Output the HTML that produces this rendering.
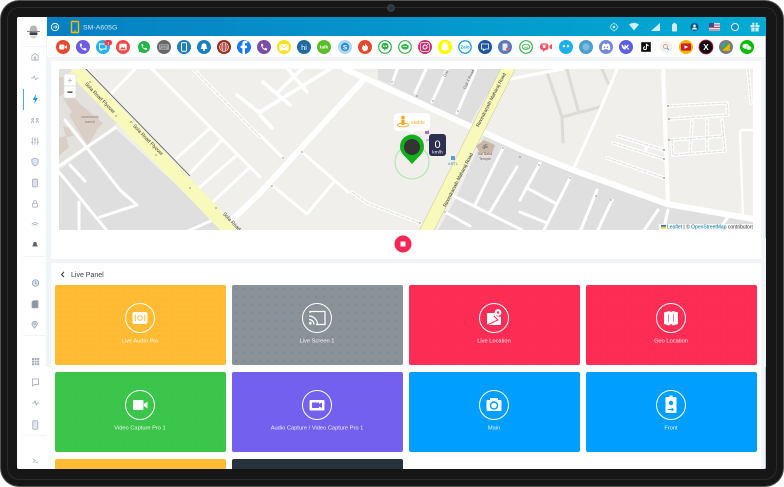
<!DOCTYPE html>
<html><head><meta charset="utf-8"><style>
html,body{margin:0;padding:0;background:#fff;width:784px;height:487px;overflow:hidden;font-family:"Liberation Sans",sans-serif}
.abs{position:absolute}
#frame{left:1px;top:1px;width:782px;height:485px;background:#161616;border-radius:18px;box-shadow:0 0 0 1px #555;box-sizing:border-box}
#ring{left:7px;top:7px;width:770px;height:473px;border:1px solid #2b2b2b;border-radius:12px;box-sizing:border-box}
#screen{left:17px;top:17px;width:749px;height:452px;background:#f1f5f7;overflow:hidden;border-radius:2px}
.t{position:absolute;width:171px;height:80px;border-radius:2px}
.dots{background-image:radial-gradient(circle,rgba(0,0,0,.22) .5px,transparent .7px);background-size:8px 8px}
.dl{background-image:radial-gradient(circle,rgba(0,0,0,.06) .5px,transparent .8px);background-size:6px 6px}
svg{position:absolute;left:0;top:0;filter:blur(.3px)}
svg text{font-family:"Liberation Sans",sans-serif}
</style></head><body>
<div class="abs" id="frame"></div>
<div class="abs" id="ring"></div>
<div class="abs" id="screen">
 <div class="abs" style="left:0;top:0;width:29px;height:452px;background:#fff"></div>
 <div class="abs" style="left:29px;top:350px;width:5px;height:102px;background:#fff"></div>
 <div class="abs" style="left:30px;top:0;width:719px;height:19px;background:linear-gradient(90deg,#0880c2,#00abd3)"></div>
 <div class="abs" style="left:30px;top:19px;width:719px;height:21px;background:#fff"></div>
 <div class="abs" style="left:34px;top:44px;width:710px;height:198px;background:#fff;border-radius:2px"></div>
 <div class="abs" style="left:34px;top:246px;width:710px;height:206px;background:#fff;border-radius:2px"></div>
 <div class="abs" style="left:748px;top:19px;width:1px;height:202px;background:#b8c4e4"></div>
 <div class="abs" style="left:748px;top:350px;width:1px;height:102px;background:#b8c4e4"></div>
 <div class="t dl" style="left:38px;top:268px;background-color:#ffbb33"></div>
 <div class="t dots" style="left:215px;top:268px;background-color:#8a9299"></div>
 <div class="t dl" style="left:392px;top:268px;background-color:#fe2d55"></div>
 <div class="t dl" style="left:569px;top:268px;background-color:#fe2d55"></div>
 <div class="t dl" style="left:38px;top:355px;background-color:#3cc54b"></div>
 <div class="t" style="left:215px;top:355px;background-color:#7460ee"></div>
 <div class="t" style="left:392px;top:355px;background-color:#009fff"></div>
 <div class="t" style="left:569px;top:355px;background-color:#009fff"></div>
 <div class="t" style="left:38px;top:442px;height:10px;border-radius:2px 2px 0 0;background-color:#ffbb33"></div>
 <div class="t" style="left:215px;top:442px;height:10px;border-radius:2px 2px 0 0;background-color:#27333a"></div>
</div>
<svg width="784" height="487" viewBox="0 0 784 487">
<defs><clipPath id="mc"><rect x="59" y="69" width="694" height="161"/></clipPath></defs>
<circle cx="391" cy="8" r="4" fill="#353c44"/><circle cx="391" cy="8" r="1.600" fill="#2c323a"/>
<g clip-path="url(#mc)">
<rect x="59" y="69" width="694" height="161" fill="#f0efeb"/>
<polygon points="59,69 70,69 118,122 87,148 59,166" fill="#e3e1de"/>
<polygon points="59,170 115,128 225,230 59,230" fill="#e0dfdf"/>
<g fill="#d9cfc6">
<polygon points="69,115 80,104 103,123 97,130 88,146 78,130"/>
<polygon points="59,77 65,77 66,92 59,97"/><polygon points="63,98 70,92 80,104 72,112"/>
<polygon points="59,138 66,136 69,147 59,156"/>
<polygon points="63,126 69,128 74,136 66,137"/>
</g>
<text x="90" y="118" font-size="3.600" fill="#8b7a6c" text-anchor="middle">community</text>
<text x="90" y="123" font-size="3.600" fill="#8b7a6c" text-anchor="middle">transit</text>
<g fill="#e0dfdf">
<polygon points="484,135 520,152 667,205 753,220 753,230 438,230 456,198"/>
<polygon points="378,69 505,69 485,98 470,124 378,79"/>
</g>
<g fill="none" stroke="#dcdcd7" stroke-width="3" stroke-linecap="round" stroke-linejoin="round">
<polyline points="547,72 562,117 563,142"/><polyline points="567,69 578,110"/><polyline points="562,117 600,107"/><polyline points="602,69 608,83"/>
</g>
<g fill="none" stroke="#fff" stroke-linecap="round" stroke-linejoin="round">
<g stroke-width="3">
<polyline points="59,166 115,128"/><polyline points="65,120 87,148 120,190 137,205 100,217"/><polyline points="70,165 85,181"/><polyline points="59,172 108,232"/><polyline points="79,202 79,232"/><polyline points="186,232 217,218"/>
<polyline points="110,95 137,67"/><polyline points="150,67 260,177"/><polyline points="177,158 210,128"/><polyline points="190,173 222,140"/><polyline points="200,187 237,155"/><polyline points="213,202 250,167"/>
<polyline points="303,153 348,192"/><polyline points="273,186 307,214 333,183"/><polyline points="260,135 283,158"/>
<polyline points="398,67 392,83"/><polyline points="427,67 415,93"/><polyline points="448,67 432,102"/><polyline points="477,67 457,113"/>
<polyline points="503,148 475,205"/><polyline points="517,167 490,212"/><polyline points="452,195 522,230"/><polyline points="445,212 470,226"/>
<polyline points="540,163 520,200"/><polyline points="527,188 555,203"/><polyline points="520,212 547,223"/><polyline points="570,178 543,232"/><polyline points="597,190 580,232"/><polyline points="612,200 597,232"/><polyline points="658,210 643,232"/><polyline points="668,210 663,232"/><polyline points="728,217 723,224"/>
<polyline points="563,69 520,77 495,83"/>
<polyline points="618,67 600,110 573,170"/>
<polyline points="753,130 741,130 740,134 743,214" stroke-width="2.400"/>
</g>
<polyline points="663,67 668,205" stroke-width="4"/>
<polyline points="345,69 520,149 573,170 667,204 753,219" stroke-width="6"/>
<polyline points="365,78 260,193 230,222" stroke-width="6"/>
</g>
<g fill="none" stroke-linecap="round" stroke-linejoin="round">
<g stroke="#fff" stroke-width="3.600">
<polyline points="193,69 260,137"/><polyline points="237,95 260,113"/>
<polyline points="330,69 260,112"/><polyline points="302,69 277,93"/><polyline points="288,69 307,92"/><polyline points="263,82 290,105"/><polyline points="260,115 272,128"/>
<polyline points="352,192 367,203 420,223"/>
<polyline points="668,106 727,103 728,115 670,119"/><polyline points="670,140 723,136"/><polyline points="672,140 673,155 725,151 722,120"/><polyline points="692,122 690,153"/><polyline points="707,120 707,152"/>
<polyline points="618,136 664,150"/><polyline points="613,143 664,159"/><polyline points="607,158 664,178"/><polyline points="647,145 645,153"/>
<polyline points="748,69 751,103"/>
</g>
<g stroke="#e2e2de" stroke-width="1.300" stroke-dasharray="3.500 2">
<polyline points="193,69 260,137"/>
<polyline points="352,192 367,203 420,223"/>
<polyline points="668,106 727,103 728,115 670,119"/><polyline points="670,140 723,136"/><polyline points="672,140 673,155 725,151 722,120"/><polyline points="692,122 690,153"/><polyline points="707,120 707,152"/>
<polyline points="618,136 664,150"/><polyline points="613,143 664,159"/><polyline points="607,158 664,178"/>
<polyline points="748,69 751,103"/>
</g></g>
<polyline points="74,69 232,232" fill="none" stroke="#f7fabb" stroke-width="14"/>
<line x1="84" y1="67" x2="190" y2="176" stroke="#55574a" stroke-width=".8"/>
<polyline points="511,63 424,236" fill="none" stroke="#c9ca8f" stroke-width="13.500"/>
<polyline points="511,63 424,236" fill="none" stroke="#f7fabb" stroke-width="12.500"/>
<g font-size="5" fill="#333">
<text transform="translate(100,98) rotate(46)" text-anchor="middle" dy="1.500">Sola Road Flyover</text>
<text transform="translate(148,140) rotate(46)" text-anchor="middle" dy="1.500">Sola Road Flyover</text>
<text transform="translate(238,228) rotate(46)" text-anchor="middle" dy="1.500">Sola Road Flyover</text>
<text transform="translate(458,180) rotate(-63)" text-anchor="middle" dy="1.500" font-size="4.800">Ravindranath Maharaj Road</text>
<text transform="translate(491,100) rotate(-63)" text-anchor="middle" dy="1.500" font-size="4.800">Ravindranath Maharaj Road</text>
<text transform="translate(470,80) rotate(-65)" text-anchor="middle" font-size="4" fill="#666">Gali 4 Road</text>
<text transform="translate(447,74) rotate(-65)" text-anchor="middle" font-size="4" fill="#666">Gali</text>
</g>
<g fill="#555"><circle cx="90" cy="82" r=".6"/><circle cx="116" cy="116" r=".6"/><circle cx="131" cy="122" r=".6"/><circle cx="156" cy="155" r=".6"/><circle cx="190" cy="188" r=".6"/><circle cx="216" cy="208" r=".6"/><circle cx="302" cy="152" r=".6"/><circle cx="283" cy="158" r=".6"/><circle cx="272" cy="186" r=".6"/><circle cx="392" cy="82" r=".6"/><circle cx="417" cy="96" r=".6"/><circle cx="433" cy="101" r=".6"/><circle cx="458" cy="111" r=".6"/><circle cx="420" cy="223" r=".6"/><circle cx="445" cy="212" r=".6"/><circle cx="503" cy="148" r=".6"/><circle cx="539" cy="165" r=".6"/><circle cx="570" cy="178" r=".6"/><circle cx="596" cy="196" r=".6"/><circle cx="611" cy="200" r=".6"/><circle cx="668" cy="106" r=".7"/><circle cx="669" cy="119" r=".7"/><circle cx="669" cy="140" r=".7"/><circle cx="664" cy="150" r=".7"/><circle cx="664" cy="159" r=".7"/><circle cx="664" cy="178" r=".7"/><circle cx="520" cy="157" r=".6"/></g>
<polygon points="476,146 484,140 495,145 492,153 480,153" fill="#c9b8a8"/>
<text x="485" y="149" font-size="6" fill="#555" text-anchor="middle">ॐ</text>
<text x="485" y="155" font-size="3.600" fill="#7a5a46" text-anchor="middle">Sai Baba</text>
<text x="485" y="160" font-size="3.600" fill="#7a5a46" text-anchor="middle">Temple</text>
<rect x="451" y="156" width="4" height="4" fill="#5a9fd8"/><text x="453" y="165" font-size="4" fill="#4a90d0" text-anchor="middle">ARTL</text>
<rect x="425" y="130" width="4" height="4" fill="#a671b8"/>
<text x="426" y="141" font-size="3.600" fill="#a671b8">pet</text>
<circle cx="412" cy="162" r="17" fill="none" stroke="#a8e6aa" stroke-width="1"/>
<path d="M412 164 L403.500 155 A12 12 0 1 1 420.500 155 Z" fill="#13b01c"/>
<circle cx="412" cy="147" r="8" fill="#343434"/>
<rect x="429" y="134" width="17" height="22" rx="3" fill="#2d2f50"/>
<text x="437.500" y="148" font-size="11" fill="#fff" text-anchor="middle">0</text>
<text x="437.500" y="153.500" font-size="4.800" fill="#fff" text-anchor="middle">km/h</text>
<rect x="394" y="113" width="36" height="18" rx="3.500" fill="#fff"/>
<polygon points="408,131 412,134 416,131" fill="#fff"/>
<circle cx="403" cy="117.500" r="1.800" fill="#f5a623"/><rect x="401.300" y="119.500" width="3.400" height="5.500" rx="1" fill="#f5a623"/><ellipse cx="403" cy="125" rx="5.500" ry="1.800" fill="none" stroke="#f5a623" stroke-width=".9"/>
<text x="411" y="124" font-size="5.200" fill="#f9b233">stable</text>
<rect x="659" y="224" width="94" height="6" fill="#fff" fill-opacity=".8"/>
<rect x="661" y="225" width="5" height="1.800" fill="#3b6fc9"/><rect x="661" y="226.800" width="5" height="1.800" fill="#f5d327"/>
<text x="667" y="228.500" font-size="5" fill="#333"><tspan fill="#0078a8">Leaflet</tspan> | © <tspan fill="#0078a8">OpenStreetMap</tspan> contributors</text>
</g>
<rect x="64" y="74" width="12" height="24" rx="1.500" fill="#fff" stroke="#ddd" stroke-width=".6"/><line x1="64" y1="86" x2="76" y2="86" stroke="#ccc" stroke-width=".5"/>
<text x="70" y="83" font-size="8" fill="#bbb" text-anchor="middle" font-weight="bold">+</text>
<rect x="67.500" y="91.500" width="5" height="1.300" fill="#333"/>
<circle cx="403" cy="244" r="8.500" fill="#f5275a"/><rect x="400.500" y="241.500" width="5" height="5" rx=".5" fill="#fff"/>
<circle cx="55" cy="27" r="3.700" fill="none" stroke="#fff" stroke-width=".9"/><path d="M53 27H57M55.500 25.500L57 27 55.500 28.500" stroke="#fff" stroke-width=".7" fill="none"/>
<rect x="71.500" y="21.500" width="7" height="11" rx=".8" fill="none" stroke="#fcb900" stroke-width="1.400"/><rect x="74" y="30.500" width="2" height=".9" fill="#fcb900"/>
<text x="83" y="29.500" font-size="6.800" fill="#cfe9f6" letter-spacing=".1">SM-A605G</text>
<g fill="#d3edf6">
<circle cx="614" cy="27" r="3.300" fill="none" stroke="#d3edf6" stroke-width=".7"/><circle cx="614" cy="27" r="1.300"/><path d="M614 22.500v1.200M614 30.300v1.200M609.500 27h1.200M617.300 27h1.200" stroke="#d3edf6" stroke-width=".6"/>
<path d="M629 24.500 Q634 21 639 24.500 L634 30.500Z"/>
<polygon points="651,31 660,23 660,31"/>
<rect x="672" y="24" width="5" height="7.500" rx=".8"/><rect x="673.300" y="22.800" width="2.400" height="1.400"/>
<circle cx="694.500" cy="27" r="4" fill="#0b4f86"/><circle cx="694.500" cy="25.800" r="1.300" fill="#fff"/><path d="M692 29.500a2.500 2 0 0 1 5 0z" fill="#fff"/>
</g>
<g><rect x="709" y="23" width="11" height="8" fill="#d8dde6"/><rect x="709" y="24.500" width="11" height="1" fill="#b85a6e"/><rect x="709" y="27" width="11" height="1" fill="#b85a6e"/><rect x="709" y="29.500" width="11" height="1" fill="#b85a6e"/><rect x="709" y="23" width="5" height="4" fill="#394f8f"/></g>
<circle cx="735" cy="27" r="3.500" fill="#0a8ed0" stroke="#e8f6fb" stroke-width="1"/>
<g fill="#d3edf6"><rect x="750.500" y="25" width="9" height="2.300"/><rect x="751.300" y="27.800" width="7.400" height="3.700"/><rect x="754.500" y="25" width="1" height="6.500" fill="#33b5d8"/><circle cx="753.300" cy="23.800" r="1.200"/><circle cx="756.700" cy="23.800" r="1.200"/></g>
<g id="apps" font-weight="bold" text-anchor="middle">
<g transform="translate(63,47)"><circle r="7" fill="#e64a2e"/><rect x="-3.700" y="-2.500" width="5" height="5" rx="1" fill="#fff"/><polygon points="1.700,-.5 3.900,-2 3.900,2 1.700,.5" fill="#fff"/></g>
<g transform="translate(83,47)"><circle r="7" fill="#6f5ce6"/><path d="M-3.200-3.200C-3.200 1-.2 3.600 3.200 3.600L3.400 1.500 1.300 .8 .3 1.800C-.8 1.300-1.500.4-1.800-.6L-.9-1.500-1.400-3.500Z" fill="#fff"/></g>
<g transform="translate(103,47)"><circle r="7" fill="#28b0ec"/><path d="M-3.500-3H3V2H0L-2 3.500V2H-3.500Z" fill="none" stroke="#fff" stroke-width=".9"/><rect x="1.500" y="-7" width="7.500" height="5.500" rx="2.500" fill="#f0374e"/><text x="5.200" y="-2.600" font-size="4" fill="#fff">1</text></g>
<g transform="translate(123,47)"><circle r="7" fill="#ef4d4b"/><rect x="-3.700" y="-3.200" width="7.400" height="6.400" rx="1" fill="#fff"/><path d="M-3 2.400L-1 -.2 .5 1.200 1.500 .3 3 2.400Z" fill="#ef4d4b"/></g>
<g transform="translate(144,47)"><circle r="6" fill="#25b34a"/><path d="M-5.500 5.500L-4.600 3 -3 4.700Z" fill="#25b34a"/><path d="M-2.500-2.700C-2.500.8.200 2.900 2.800 2.900L3 1.300 1.200.7.400 1.400C-.5 1-1.100.3-1.300-.5L-.6-1.200-1.100-2.900Z" fill="#fff"/></g>
<g transform="translate(164,47)"><circle r="7" fill="#666"/><rect x="-5" y="-2.800" width="10" height="5.600" rx=".8" fill="#aaa"/><path d="M-4-1.500H4M-4 0H4M-2.500 1.500H2.500" stroke="#555" stroke-width=".7" stroke-dasharray="1 .6"/></g>
<g transform="translate(184,47)"><circle r="7" fill="#1f7fb8"/><rect x="-2.500" y="-4.200" width="5" height="8.400" rx=".9" fill="none" stroke="#fff" stroke-width="1"/></g>
<g transform="translate(204,47)"><circle r="7" fill="#1a7fbf"/><path d="M-3.500 2C-2.700 1-2.500 0-2.500-1A2.500 2.700 0 0 1 2.500-1C2.500 0 2.700 1 3.500 2Z" fill="#fff"/><circle cy="3" r="1" fill="#fff"/></g>
<g transform="translate(224,47)"><circle r="7" fill="#9c2a1e"/><g fill="none" stroke="#fff" stroke-width=".6"><circle r="4.500"/><ellipse rx="2" ry="4.500"/><path d="M-4.500 0H4.500M-4-2H4M-4 2H4"/></g></g>
<g transform="translate(244,47)"><circle r="7" fill="#1877f2"/><path d="M1.200-6.200C-.8-6.400-1.600-5-1.600-3.600V-1.400H-3.400V1.100H-1.600V7H1V1.100H2.900L3.200-1.400H1V-3.100C1-3.700 1.300-3.900 1.800-3.900H3.300V-6.100Z" fill="#fff"/></g>
<g transform="translate(264,47)"><circle r="7" fill="#7d4ca8"/><path d="M-3-3C-3 1-.2 3.400 3 3.400L3.200 1.500 1.200.8.300 1.700C-.7 1.200-1.300.4-1.500-.5L-.7-1.400-1.200-3.300Z" fill="#fff"/></g>
<g transform="translate(284,47)"><circle r="7" fill="#f8e21b"/><rect x="-4.500" y="-3" width="9" height="6.500" rx=".5" fill="#fff"/><path d="M-4.500-3L0 .8 4.500-3" fill="none" stroke="#f8e21b" stroke-width=".7"/></g>
<g transform="translate(304,47)"><circle r="7" fill="#1c6aa0"/><text y="2.800" font-size="7.500" fill="#fff" font-weight="normal">hi</text></g>
<g transform="translate(324,47)"><circle r="7" fill="#5bbd2b"/><text y="1.700" font-size="4.800" fill="#fff">talk</text></g>
<g transform="translate(345,47)"><circle r="7" fill="#a9d8f0"/><circle r="4.200" fill="#2f8fd0"/><text y="2.400" font-size="6.500" fill="#fff">S</text></g>
<g transform="translate(365,47)"><circle r="7" fill="#e64a2a"/><path d="M0-4.500C.5-2 3-1.500 3 1A3 3.200 0 0 1-3 1C-3-.5-2-1-1.500-2-1-1-.5-.8 0-.8.300-2 .3-3 0-4.500Z" fill="#fff"/></g>
<g transform="translate(385,47)"><circle r="6.300" fill="#fff" stroke="#2fb14a" stroke-width="1.200"/><path d="M-3.500-1.200A3.500 3 0 0 1 3.500-1.200V.5A3.500 3 0 0 1 0 2.500L-1 4V2.300A3.500 3 0 0 1-3.500.5Z" fill="#2fb14a"/><rect x="-2" y="-1.500" width="1.400" height="1.500" fill="#fff"/><rect x=".6" y="-1.500" width="1.400" height="1.500" fill="#fff"/></g>
<g transform="translate(405,47)"><circle r="6.300" fill="#fff" stroke="#36b54a" stroke-width="1.200"/><ellipse cy="-.2" rx="3.800" ry="2.800" fill="#36b54a"/><path d="M-2-.5H2" stroke="#fff" stroke-width=".6"/></g>
<g transform="translate(425,47)"><circle r="7" fill="#c13584"/><rect x="-4.500" y="-4.500" width="9" height="9" rx="2.200" fill="none" stroke="#ffcf9e" stroke-width=".9"/><circle r="2" fill="none" stroke="#fff" stroke-width="1"/><circle cx="2.700" cy="-2.700" r=".6" fill="#fff"/></g>
<g transform="translate(445,47)"><circle r="7" fill="#fffc00" stroke="#f8d800" stroke-width=".3"/><path d="M0-4.500A2.800 2.800 0 0 1 2.800-1.700L2.800 0 4 .8 3 1.500 3.600 2.700 1.400 3.200 0 4-1.400 3.200-3.600 2.700-3 1.500-4 .8-2.800 0-2.800-1.700A2.800 2.800 0 0 1 0-4.500Z" fill="#fff"/></g>
<g transform="translate(465,47)"><circle r="6.200" fill="#fff" stroke="#1ea3d8" stroke-width="1.300"/><text y="1.700" font-size="4.500" fill="#1ea3d8">Zalo</text></g>
<g transform="translate(485,47)"><circle r="7" fill="#1e56a0"/><path d="M-3.500-3H3.500V2H.5L-1.500 3.500V2H-3.500Z" fill="none" stroke="#fff" stroke-width=".8"/></g>
<g transform="translate(505,47)"><circle r="7" fill="#5e79b8"/><rect x="-2.500" y="-3.500" width="5" height="7" rx=".8" fill="#e8ecf7"/><circle cx="2.500" cy="2" r="1.500" fill="#d85a6a"/></g>
<g transform="translate(526,47)"><circle r="6.300" fill="#fff" stroke="#36b54a" stroke-width="1.200"/><ellipse cy="-.2" rx="3.800" ry="2.600" fill="none" stroke="#36b54a" stroke-width=".9"/><text y="1.300" font-size="3.600" fill="#36b54a">oo</text></g>
<g transform="translate(546,47)"><rect x="-6" y="-3.800" width="8.500" height="7" rx="3" fill="#ee5466"/><path d="M-4-2H.5" stroke="#fff" stroke-width=".7"/><circle cx="-1.800" cy="-.3" r="1.300" fill="#fff"/><polygon points="3.500,-1.500 6,-3 6,2.600 3.500,1" fill="#ee5466"/><path d="M-3 3.200L-3 5 -1 3.200" fill="#ee5466"/></g>
<g transform="translate(566,47)"><circle r="7" fill="#1ab0ee"/><circle cx="-2" cy="-.8" r="1.200" fill="#fff"/><circle cx="2" cy="-.8" r="1.200" fill="#fff"/></g>
<g transform="translate(586,47)"><circle r="7" fill="#4a9fd0"/><circle r="3.600" fill="#7fbbe0"/></g>
<g transform="translate(606,47)"><circle r="7" fill="#7289da"/><path d="M-4.200 2.600C-4.400-.5-3.500-2.500-2.800-3.200L-1.200-3.600-.8-2.800H.8L1.200-3.600 2.800-3.200C3.500-2.500 4.400-.5 4.200 2.600L2.500 3.300 1.900 2.300H-1.900L-2.500 3.300Z" fill="#fff"/><circle cx="-1.400" cy=".2" r=".8" fill="#7289da"/><circle cx="1.400" cy=".2" r=".8" fill="#7289da"/></g>
<g transform="translate(626,47)"><circle r="7" fill="#5b5fe0"/><path d="M-4.500-2.300H-3C-2.700-.8-2-.1-1.500.2V-2.300H-.2V-.7C.5-.9 1.200-1.500 1.600-2.300H2.900C2.600-1.300 1.900-.4 1.200.1 2 .5 2.800 1.300 3.300 2.500H1.800C1.400 1.600.7 1 -.2.800V2.500H-.7C-2.800 2.500-4.300 .8-4.500-2.300Z" fill="#fff"/></g>
<g transform="translate(646,47)"><rect x="-4.800" y="-4.800" width="9.600" height="9.600" fill="#0b0b0b"/><path d="M.4-3.200V1.200A1.400 1.400 0 1 1-1 -.2M.4-3.200C.7-2 1.500-1.400 2.700-1.300" fill="none" stroke="#fff" stroke-width="1"/></g>
<g transform="translate(666,47)"><circle r="6" fill="#eef0f2"/><circle cx="-.5" cy="-.5" r="2.100" fill="none" stroke="#e0a06a" stroke-width=".9"/><path d="M1 1L2.800 2.800" stroke="#4a8fd8" stroke-width="1"/></g>
<g transform="translate(686,47)"><circle r="7" fill="#f5b400"/><rect x="-5" y="-3.600" width="10" height="7.200" rx="1.500" fill="#c8202a"/><polygon points="-1.500,-1.800 2.200,0 -1.500,1.800" fill="#fff"/></g>
<g transform="translate(706,47)"><circle r="7" fill="#0b0b0b" stroke="#d81b4a" stroke-width=".8"/><text y="3" font-size="8.500" fill="#fff" font-family="Liberation Serif">X</text></g>
<g transform="translate(726,47)"><circle r="7" fill="#7b7b7b"/><rect x="-3.800" y="-3.800" width="7.600" height="7.600" rx="1" fill="#3aa757"/><path d="M-3.800 3.800L3.800-3.800V3.800Z" fill="#f5b400"/><path d="M-3.800-3.800H0L-3.800 0Z" fill="#4a8fd8"/></g>
<g transform="translate(747,47)"><circle r="7" fill="#09bb07"/><ellipse cx="-1.200" cy="-.8" rx="3.300" ry="2.600" fill="#fff"/><ellipse cx="1.800" cy="1" rx="2.700" ry="2.200" fill="#fff" stroke="#09bb07" stroke-width=".4"/></g>
</g>
<!-- sidebar icons: centred at x=35, scaled to roughly 7px -->
<g fill="none" stroke="#9aa6b2" stroke-width=".9" stroke-linejoin="round" stroke-linecap="round">
<g transform="translate(35,57) scale(.78)"><path d="M-4 4V-1.500L0-4.500 4-1.500V4Z"/><rect x="-1" y="0" width="2" height="4"/></g>
<g transform="translate(35,78) scale(.78)"><path d="M-4.500 0H-2.500L-1-2.500 1 2.500 2.500 0H4.500"/></g>
<g transform="translate(35,120) scale(.75)"><path d="M-4.500 4V2.500C-4 1-2 1-1.500 2.500V4M1.500 4V2.500C2 1 4 1 4.500 2.500V4"/><circle cx="-3" cy="-1" r="1.300"/><circle cx="3" cy="-1" r="1.300"/></g>
<g transform="translate(35,141) scale(.78)"><path d="M-3.500-4.500V4.500M0-4.500V4.500M3.500-4.500V4.500M-4.700 1.500H-2.300M-1.200-1.500H1.200M2.300 1.500H4.700"/></g>
<g transform="translate(35,162) scale(.78)"><path d="M0-5L4-3.500V0C4 2.500 2 4 0 5-2 4-4 2.500-4 0V-3.500Z" fill="#dbe6f3"/></g>
<g transform="translate(35,183) scale(.78)"><rect x="-3.200" y="-5" width="6.400" height="10" rx="1" fill="#dfe5ea"/></g>
<g transform="translate(35,204) scale(.78)"><rect x="-3" y="-1" width="6" height="5" rx=".8"/><path d="M-1.700-1V-2.700A1.700 1.700 0 0 1 1.700-2.700V-1"/></g>
<g transform="translate(35,224) scale(.78)"><path d="M-4 0Q0-3.500 4 0M-2.500 1.500Q0-.5 2.500 1.500"/></g>
<g transform="translate(35,244) scale(.7)"><path d="M-3.500 3C-2.500 2-2 1-2-.5A2 2 0 0 1 2-.5C2 1 2.500 2 3.500 3Z" fill="#5a6570" stroke="#5a6570"/></g>
<g transform="translate(35.500,283) scale(.9)"><circle r="3.600" fill="#dbe6f3"/><path d="M0-2V.3L1.500 1"/></g>
<g transform="translate(35,304) scale(.85)"><path d="M-3.500-2.500L-1.500-4H3.500V4.500H-3.500Z" fill="#8a98a6"/></g>
<g transform="translate(34.500,324) scale(.85)"><path d="M0 5C-1.500 3-3 1-3-.5A3.200 3.200 0 0 1 3.300-.5C3.300 1 1.500 3 0 5Z" fill="#dbe6f3"/><circle cx=".2" cy="-.5" r="1"/></g>
<g transform="translate(35.500,382) scale(.85)"><path d="M-3.500-3.500H3.500V3H-1.500L-3.500 5Z"/></g>
<g transform="translate(35.500,403) scale(.85)"><path d="M-3.500 0H-1.700L-.5-2.500 1 2.500 2.100 0H4"/></g>
<g transform="translate(35.300,425) scale(.85)"><rect x="-3" y="-5" width="6" height="10" rx="1" fill="#dfe5ea"/></g>
<g transform="translate(35.300,461) scale(.85)"><path d="M-2.500-2.500L0-.5-2.500 1.500M.5 2H3"/></g>
</g>
<g fill="#a1acb7"><rect x="32" y="358" width="2" height="2"/><rect x="34.600" y="358" width="2" height="2"/><rect x="37.200" y="358" width="2" height="2"/><rect x="32" y="360.600" width="2" height="2"/><rect x="34.600" y="360.600" width="2" height="2"/><rect x="37.200" y="360.600" width="2" height="2"/><rect x="32" y="363.200" width="2" height="2"/><rect x="34.600" y="363.200" width="2" height="2"/><rect x="37.200" y="363.200" width="2" height="2"/></g>
<path d="M36 94L32.800 100H35L34.200 104 37.800 98H35.500Z" fill="#1a90f0"/>
<rect x="23" y="89" width="1" height="21" fill="#4aa8f0"/>
<g stroke="#eef1f3" stroke-width=".8"><path d="M23 46.500H46M23 256.500H46M23 335.500H46M23 435.500H46"/></g>
<!-- hat -->
<path d="M29.500 31C30 26.500 31.500 25.200 33.500 25.800 35.500 25.200 37 26.500 37.500 31Z" fill="#b5b5b5"/>
<path d="M27 31.500H40" stroke="#888" stroke-width="1"/>
<rect x="29.500" y="32.300" width="8" height="2.700" rx="1" fill="#3e3e3e"/>
<path d="M30 35.500C31 39.500 36 39.500 37 35.500Z" fill="#d4d4d4"/>
<path d="M64 271.800L61.500 274.500 64 277" fill="none" stroke="#333" stroke-width="1"/>
<text x="71" y="277" font-size="7" fill="#3b4046">Live Panel</text>
<g fill="none" stroke="#fff" stroke-width="1">
<circle cx="140" cy="318" r="14.500"/><circle cx="317" cy="318" r="14.500"/><circle cx="494" cy="318" r="14.500"/><circle cx="671" cy="318" r="14.500"/>
<circle cx="140" cy="405" r="14.500"/><circle cx="317" cy="405" r="14.500"/><circle cx="494" cy="405" r="14.500"/><circle cx="671" cy="405" r="14.500"/>
</g>
<rect x="132.500" y="312" width="15" height="12" rx="2" fill="#fff"/><circle cx="140" cy="318" r="2.300" fill="none" stroke="#ffbb33" stroke-width="1"/><path d="M135.700 315Q134.300 318 135.700 321M144.300 315Q145.700 318 144.300 321" fill="none" stroke="#ffbb33" stroke-width="1"/>
<path d="M310 313V311.500H325V324.500H316" fill="none" stroke="#fff" stroke-width="1.300"/><g fill="none" stroke="#fff" stroke-width="1.200"><path d="M309 316A8.500 8.500 0 0 1 317.500 324.500M309 319.500A5 5 0 0 1 314 324.500"/></g><circle cx="310.300" cy="323.300" r="1.400" fill="#fff"/>
<path d="M487 313H496V325H487Z" fill="#fff"/><path d="M496 316L501 317V325H496Z" fill="#fff"/><circle cx="498" cy="312.500" r="3.400" fill="#fff"/><circle cx="498" cy="312.500" r="1.200" fill="#fe2d55"/><path d="M494 316L498 320 487 325" stroke="#fe2d55" stroke-width="1" fill="none"/>
<path d="M664 312.500L669 311 671 312 673 311 678 312.500V324L673 325.500 671 324 669 325.500 664 324Z" fill="#fff"/><path d="M668.700 314V322M673.300 314V322" stroke="#fe2d55" stroke-width=".6"/>
<rect x="133" y="400" width="10.500" height="10" rx="1.500" fill="#fff"/><polygon points="144,404 147.500,401.500 147.500,408.500 144,406" fill="#fff"/>
<rect x="309.500" y="400" width="15" height="10.500" rx="1" fill="#fff"/><rect x="312" y="402.500" width="7" height="5.500" rx=".5" fill="#7460ee"/><polygon points="319,404 322,402.500 322,408 319,406.500" fill="#7460ee"/>
<rect x="486.500" y="400" width="15" height="11" rx="1" fill="#fff"/><rect x="490" y="398" width="8" height="3" fill="#fff"/><circle cx="494" cy="405.500" r="3.500" fill="none" stroke="#009fff" stroke-width="1.400"/>
<rect x="665.500" y="397" width="11" height="16" rx="1" fill="#fff"/><circle cx="671" cy="403" r="2.200" fill="#009fff"/><path d="M668 409.500H673M671.500 408L673.500 409.500 671.500 411" fill="none" stroke="#009fff" stroke-width=".9"/><rect x="669.500" y="395.500" width="3" height="1.500" fill="#fff"/>
<g font-size="5.700" fill="#fff" fill-opacity=".9" text-anchor="middle">
<text x="140" y="342.500">Live Audio Pro</text><text x="317" y="342.500">Live Screen 1</text><text x="494" y="342.500">Live Location</text><text x="671" y="342.500">Geo Location</text>
<text x="140" y="429.500">Video Capture Pro 1</text><text x="317" y="429.500">Audio Capture / Video Capture Pro 1</text><text x="494" y="429.500">Main</text><text x="671" y="429.500">Front</text>
</g>
</svg>
</body></html>
